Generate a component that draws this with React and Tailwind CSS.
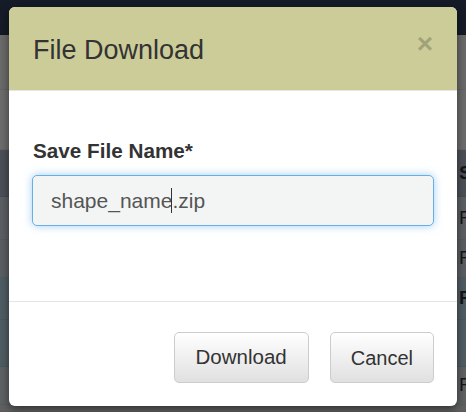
import React from 'react';

const font = { fontFamily: '"Liberation Sans", Arial, sans-serif' };

// background page rows, dimmed by the modal backdrop
const rows = [
  { h: 'h-[35px]', bg: 'bg-[#151b27]', t: '' },
  { h: 'h-[55px]', bg: 'bg-[#6a6a6a]', t: '' },
  { h: 'h-[60px]', bg: 'bg-[#6c6c6c]', t: '' },
  { h: 'h-[47px]', bg: 'bg-[#4b5058]', t: 'S', bold: true },
  { h: 'h-[43px]', bg: 'bg-[#5b5f63]', t: 'F' },
  { h: 'h-[38px]', bg: 'bg-[#5a5e62]', t: 'F' },
  { h: 'h-[42px]', bg: 'bg-[#4f5d63]', t: 'F', bold: true },
  { h: 'h-[47px]', bg: 'bg-[#4f5d63]', t: '' },
  { h: 'h-[38px]', bg: 'bg-[#5e6163]', t: 'F' },
  { h: 'h-[7px]', bg: 'bg-[#606060]', t: '' },
];

export default function App() {
  return (
    <div className="relative w-[466px] h-[412px] overflow-hidden" style={font}>
      <div className="flex flex-col">
        {rows.map((r, i) => (
          <div
            key={i}
            className={`${r.h} ${r.bg} flex items-center pl-[459px] text-[19px] text-[#151515] border-b border-black/5 ${r.bold ? 'font-bold' : ''}`}
          >
            {r.t}
          </div>
        ))}
      </div>

      <div className="absolute left-[9px] top-[7px] w-[448px] h-[399px] rounded-[6px] overflow-hidden bg-white shadow-[0_3px_9px_rgba(0,0,0,0.5)] flex flex-col">
        <div className="h-[84px] bg-[#cccc99] border-b border-[#e5e5e5] flex items-start justify-between pl-[24px] pr-[24px]">
          <h4 className="text-[27px] leading-none text-[#333] pt-[30px]">File Download</h4>
          <span className="text-[28px] font-bold leading-none text-black opacity-20 mt-[23px]">×</span>
        </div>

        <div className="px-[23px] pt-[48px] pb-[75px]">
          <label className="block text-[20.7px] leading-[24px] font-bold text-[#333] pl-[1px] mb-[12px]">
            Save File Name*
          </label>
          <div className="h-[51px] rounded-[5px] border border-[#66afe9] bg-[#f3f5f4] shadow-[0_0_8px_rgba(102,175,233,0.6)] flex items-center pl-[18px] text-[21px] text-[#555]">
            <span>shape_name</span>
            <span className="w-px h-[25px] bg-[#333] -ml-px"></span>
            <span>.zip</span>
          </div>
        </div>

        <div className="border-t border-[#e5e5e5] flex justify-end gap-[21px] pt-[30px] pr-[23px]">
          <button className="h-[51px] px-[21px] rounded-[5px] border border-[#ccc] bg-gradient-to-b from-white to-[#e0e0e0] text-[20.5px] text-[#333]">
            Download
          </button>
          <button className="h-[51px] px-[20px] rounded-[5px] border border-[#ccc] bg-gradient-to-b from-white to-[#e0e0e0] text-[20px] text-[#333]">
            Cancel
          </button>
        </div>
      </div>
    </div>
  );
}
